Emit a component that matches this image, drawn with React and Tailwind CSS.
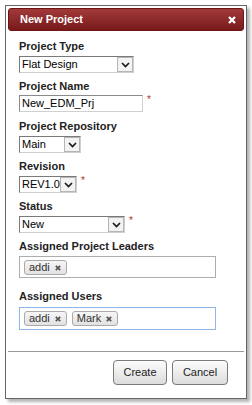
import React from "react";

const font = { fontFamily: '"Liberation Sans", Arial, sans-serif' };

function Chevron() {
  return (
    <svg width="9" height="6" viewBox="0 0 9 6">
      <path d="M1 1 L4.5 4.5 L8 1" fill="none" stroke="#1a1a1a" strokeWidth="1.7" />
    </svg>
  );
}

function Select({ value, w }) {
  return (
    <div
      className={`flex h-[17px] items-stretch border border-t-[#7a7a7a] border-l-[#7a7a7a] border-r-[#cfcfcf] border-b-[#cfcfcf] bg-white ${w}`}
    >
      <div className="flex-1 pl-[2px] text-[11px] leading-[15px] text-black overflow-hidden whitespace-nowrap">
        {value}
      </div>
      <div className="flex w-[16px] items-center justify-center border border-[#b5b5b5] bg-[#f3f3f3]">
        <Chevron />
      </div>
    </div>
  );
}

function Star() {
  return <span className="ml-[4px] self-start text-[10px] leading-[10px] text-[#b03030]">*</span>;
}

function Label({ children }) {
  return <div className="text-[11px] font-bold leading-[14px] text-[#222]">{children}</div>;
}

function TagX() {
  return (
    <svg width="6" height="6" viewBox="0 0 6 6">
      <path d="M0.8 0.8 L5.2 5.2 M5.2 0.8 L0.8 5.2" stroke="#555" strokeWidth="1.7" />
    </svg>
  );
}

function Tag({ text }) {
  return (
    <div className="flex h-[15px] items-center gap-[5px] rounded-[3px] border border-[#aaa] bg-gradient-to-b from-[#f6f6f6] to-[#e2e2e2] pl-[4px] pr-[5px] text-[11px] leading-[13px] text-[#333]">
      <span>{text}</span>
      <TagX />
    </div>
  );
}

function Button({ children, w }) {
  return (
    <div
      className={`flex h-[25px] items-center justify-center rounded-[4px] border border-[#7a7a7a] bg-gradient-to-b from-[#fdfdfd] to-[#dcdcdc] text-[11px] text-[#222] ${w}`}
    >
      {children}
    </div>
  );
}

export default function App() {
  return (
    <div className="h-[405px] w-[252px] bg-white pl-[5px] pt-[5px]" style={font}>
      <div className="flex h-[394px] w-[242px] flex-col border border-[#666] bg-white shadow-[3px_3px_3px_rgba(0,0,0,0.3)]">
        <div className="mx-[2px] mt-[2px] flex h-[23px] items-center justify-between rounded-[3px] border border-[#6e1616] bg-gradient-to-b from-[#a33a3a] to-[#781a1a] pl-[11px] pr-[7px]">
          <span className="text-[11px] font-bold text-white">New Project</span>
          <svg width="8" height="8" viewBox="0 0 8 8">
            <path d="M1 1 L7 7 M7 1 L1 7" stroke="#fff" strokeWidth="2.3" />
          </svg>
        </div>

        <div className="flex flex-col pl-[13px] pt-[8px]">
          <div className="flex flex-col">
            <Label>Project Type</Label>
            <div className="mt-[3px] flex">
              <Select value="Flat Design" w="w-[115px]" />
            </div>
          </div>

          <div className="mt-[6px] flex flex-col">
            <Label>Project Name</Label>
            <div className="mt-[2px] flex">
              <div className="h-[17px] w-[124px] border border-t-[#8a8a8a] border-l-[#8a8a8a] border-r-[#d0d0d0] border-b-[#d0d0d0] bg-white pl-[2px] text-[11px] leading-[15px] text-black">
                New_EDM_Prj
              </div>
              <Star />
            </div>
          </div>

          <div className="mt-[7px] flex flex-col">
            <Label>Project Repository</Label>
            <div className="mt-[3px] flex">
              <Select value="Main" w="w-[62px]" />
            </div>
          </div>

          <div className="mt-[6px] flex flex-col">
            <Label>Revision</Label>
            <div className="mt-[3px] flex">
              <Select value="REV1.0" w="w-[58px]" />
              <Star />
            </div>
          </div>

          <div className="mt-[6px] flex flex-col">
            <Label>Status</Label>
            <div className="mt-[3px] flex">
              <Select value="New" w="w-[106px]" />
              <Star />
            </div>
          </div>

          <div className="mt-[6px] flex flex-col">
            <Label>Assigned Project Leaders</Label>
            <div className="mt-[3px] flex h-[22px] w-[197px] items-start border border-[#adadad] bg-white pl-[4px] pt-[3px]">
              <Tag text="addi" />
            </div>
          </div>

          <div className="mt-[11px] flex flex-col">
            <Label>Assigned Users</Label>
            <div className="mt-[4px] flex h-[23px] w-[197px] items-start gap-[5px] border border-[#8fb6ea] bg-white pl-[4px] pt-[3px]">
              <Tag text="addi" />
              <Tag text="Mark" />
            </div>
          </div>
        </div>

        <div className="mx-[2px] mt-[21px] h-px bg-[#999]" />

        <div className="flex justify-end gap-[5px] pr-[18px] pt-[8px]">
          <Button w="w-[54px]">Create</Button>
          <Button w="w-[56px]">Cancel</Button>
        </div>
      </div>
    </div>
  );
}
